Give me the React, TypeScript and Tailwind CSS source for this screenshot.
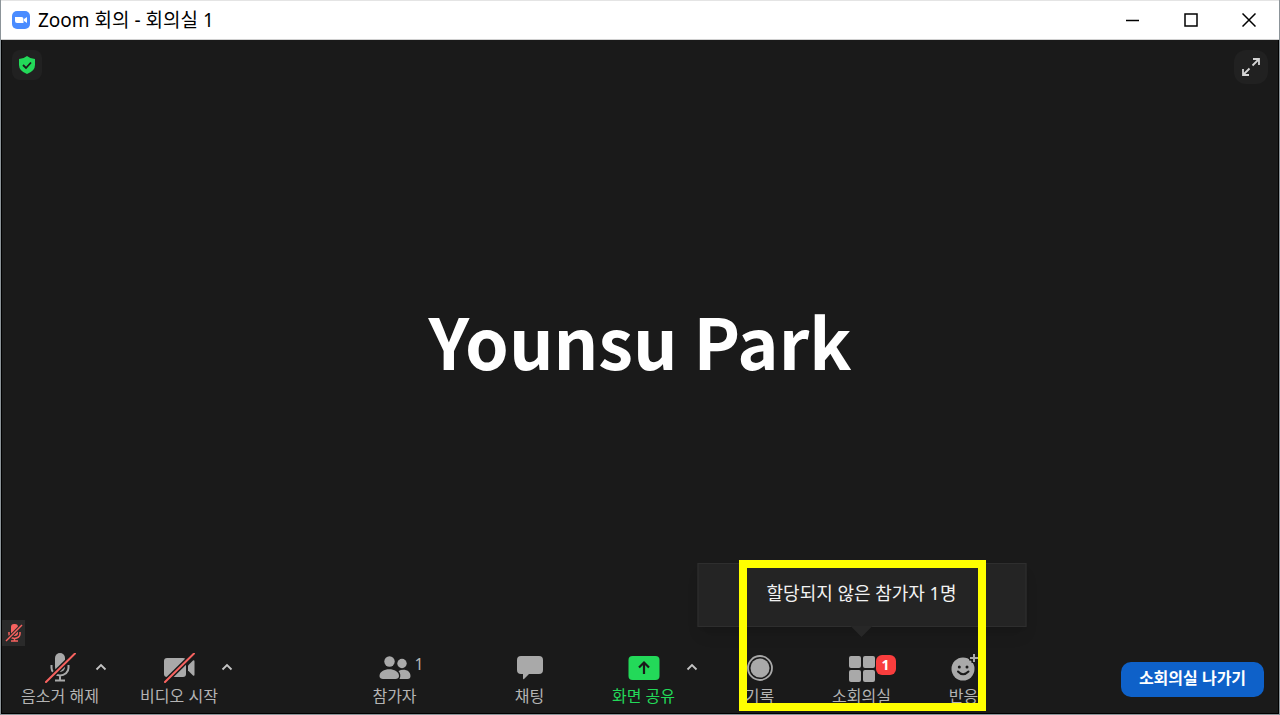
import type { ReactNode } from "react";

const slash = (d: string) => (
  <>
    <path d={d} stroke="#1a1a1a" strokeWidth="5" />
    <path d={d} stroke="#f7625f" strokeWidth="2" strokeLinecap="round" />
  </>
);

function MicOffIcon() {
  return (
    <svg width="32" height="30" viewBox="0 0 32 30" fill="none" aria-hidden="true">
      <rect x="11" y="0" width="10" height="19" rx="5" fill="#a9a9a9" />
      <path d="M7.5 12v3a8.5 7.5 0 0 0 17 0v-3M16 22v5M11 27.5h10" stroke="#a9a9a9" strokeWidth="2" />
      {slash("M2 29 31 0.5")}
    </svg>
  );
}

function VideoOffIcon() {
  return (
    <svg width="34" height="30" viewBox="0 0 34 30" fill="none" aria-hidden="true">
      <rect x="2" y="5" width="22" height="19" rx="3" fill="#a9a9a9" />
      <path d="M26 12.5 31 7.500q1.500-.8 1.500 1v13q0 1.800-1.500 1L26 17.500Z" fill="#a9a9a9" />
      {slash("M3 29 32 0.500")}
    </svg>
  );
}

function ParticipantsIcon() {
  return (
    <svg width="32" height="24" viewBox="0 0 32 24" fill="#a9a9a9" aria-hidden="true">
      <circle cx="23" cy="7.500" r="4.700" />
      <path d="M20.500 23c1.500-3 1-6-1-8 5-2.500 12-1 12 5 0 2-1 3-3 3Z" />
      <circle cx="10.500" cy="5.500" r="5.200" />
      <path d="M4 23c-2 0-3.500-1-3.500-3C.5 11 20 11 20 20c0 2-1.500 3-3.500 3Z" />
    </svg>
  );
}

function ChatIcon() {
  return (
    <svg width="28" height="26" viewBox="0 0 28 26" fill="#a9a9a9" aria-hidden="true">
      <path d="M5 1h18q4 0 4 4v10q0 4-4 4H13l-5 5q-1 1-1-1v-4H5q-4 0-4-4V5q0-4 4-4Z" />
    </svg>
  );
}

function ShareIcon() {
  return (
    <svg width="32" height="24" viewBox="0 0 32 24" fill="none" aria-hidden="true">
      <rect x="0.500" width="31" height="24" rx="4" fill="#23d959" />
      <path d="M16 18V7M11 11.500 16 6.500l5 5" stroke="#1a1a1a" strokeWidth="2.200" />
    </svg>
  );
}

function RecordIcon() {
  return (
    <svg width="26" height="26" viewBox="0 0 26 26" fill="none" aria-hidden="true">
      <circle cx="13" cy="13" r="12" stroke="#a9a9a9" strokeWidth="1.800" />
      <circle cx="13" cy="13" r="9.500" fill="#a9a9a9" />
    </svg>
  );
}

function RoomsIcon() {
  return (
    <svg width="28" height="28" viewBox="0 0 28 28" fill="#a9a9a9" aria-hidden="true">
      <rect x="1" y="2" width="12" height="12" rx="2" />
      <rect x="15" y="2" width="12" height="12" rx="2" />
      <rect x="1" y="16" width="12" height="12" rx="2" />
      <rect x="15" y="16" width="12" height="12" rx="2" />
    </svg>
  );
}

function ReactionIcon() {
  return (
    <svg width="28" height="28" viewBox="0 0 28 28" fill="none" aria-hidden="true">
      <circle cx="13" cy="15" r="11.500" fill="#a9a9a9" />
      <circle cx="9.300" cy="13" r="1.500" fill="#1a1a1a" />
      <circle cx="17" cy="13" r="1.500" fill="#1a1a1a" />
      <path d="M8 17.500q5 5.500 10.500 0" stroke="#1a1a1a" strokeWidth="2" strokeLinecap="round" />
      <path d="M24 -1v10M19 4h10" stroke="#1a1a1a" strokeWidth="5" />
      <path d="M24 0v8M20 4h8" stroke="#a9a9a9" strokeWidth="2" />
    </svg>
  );
}

function Caret({ label, className = "" }: { label: string; className?: string }) {
  return (
    <button type="button" aria-label={label} className={`flex h-[30px] w-4 shrink-0 items-center justify-center ${className}`}>
      <svg width="12" height="8" viewBox="0 0 12 8" fill="none" aria-hidden="true">
        <path d="M1.500 6.500 6 2l4.500 4.500" stroke="#c4c4c4" strokeWidth="1.800" />
      </svg>
    </button>
  );
}

function Tool({ icon, label, className = "", labelClass = "text-[#b4b4b4]", children }: {
  icon: ReactNode;
  label: string;
  className?: string;
  labelClass?: string;
  children?: ReactNode;
}) {
  return (
    <div className={`relative shrink-0 ${className}`}>
      <button type="button" className="flex w-20 flex-col items-center">
        <span className="flex h-8 items-center justify-center">{icon}</span>
        <span className={`whitespace-nowrap text-base leading-6 ${labelClass}`}>{label}</span>
      </button>
      {children}
    </div>
  );
}

function TitleBar() {
  return (
    <header className="flex h-10 shrink-0 items-center justify-between border-t border-b border-t-[#e4e4e4] border-b-[#d0d0d0] bg-white pl-[11px] text-black">
      <div className="flex items-center gap-2">
        <svg width="18" height="18" viewBox="0 0 18 18" aria-hidden="true">
          <rect width="18" height="18" rx="5" fill="#4a8cff" />
          <path d="M3 6h6.500q2 0 2 2v4H5q-2 0-2-2ZM12 8l3-2v6l-3-2Z" fill="#fff" />
        </svg>
        <h1 className="text-[19px] leading-6">Zoom 회의 - 회의실 1</h1>
      </div>
      <div className="flex pr-px">
        <button type="button" aria-label="최소화" className="flex h-9 w-[58px] items-center justify-center">
          <svg width="14" height="14" viewBox="0 0 14 14" aria-hidden="true"><path d="M0 7.500h13" stroke="#000" strokeWidth="1.500" /></svg>
        </button>
        <button type="button" aria-label="최대화" className="flex h-9 w-[58px] items-center justify-center">
          <svg width="14" height="14" viewBox="0 0 14 14" fill="none" aria-hidden="true"><rect x="1" y="1" width="12" height="12" stroke="#000" strokeWidth="1.500" /></svg>
        </button>
        <button type="button" aria-label="닫기" className="flex h-9 w-[58px] items-center justify-center">
          <svg width="14" height="14" viewBox="0 0 14 14" aria-hidden="true"><path d="m.5.5 13 13M13.500.5l-13 13" stroke="#000" strokeWidth="1.500" /></svg>
        </button>
      </div>
    </header>
  );
}

export default function App() {
  return (
    <div className="flex min-h-screen flex-col overflow-hidden border-x border-b border-[#8c9499] bg-[#1a1a1a] font-['Noto_Sans','Noto_Sans_CJK_KR',sans-serif]">
      <TitleBar />
      <main className="relative flex flex-1 flex-col border-x border-b border-black">
        <div className="flex h-14 items-start justify-between px-2.5 pt-2.5">
          <button type="button" aria-label="암호화 정보" className="flex size-[30px] items-center justify-center rounded-lg bg-[#212121]">
            <svg width="18" height="20" viewBox="0 0 18 20" fill="none" aria-hidden="true">
              <path d="M9 1q3.500 3 8 3v6q0 6-8 9-8-3-8-9V4q4.500 0 8-3Z" fill="#23d959" />
              <path d="m5 10 3 3 5-5.500" stroke="#1a1a1a" strokeWidth="1.800" />
            </svg>
          </button>
          <button type="button" aria-label="전체 화면" className="flex size-[34px] items-center justify-center rounded-xl bg-[#212121]">
            <svg width="20" height="20" viewBox="0 0 20 20" fill="none" stroke="#d4d4d4" strokeWidth="1.800" aria-hidden="true">
              <path d="M11.500 8.500 18 2M12 2h6v6M8.500 11.500 2 18M2 12v6h6" />
            </svg>
          </button>
        </div>
        <div className="flex flex-1 items-center justify-center pb-9">
          <h2 className="font-['Noto_Sans_CJK_KR',sans-serif] text-[70px] leading-none font-bold text-white">Younsu Park</h2>
        </div>
        <div className="flex h-[26px] w-[23px] items-center justify-center bg-[#2a2a2a]">
          <svg width="18" height="20" viewBox="0 0 18 20" fill="none" aria-label="음소거됨" role="img">
            <rect x="6" y="1" width="7" height="12" rx="3" fill="#f7625f" />
            <path d="M4 9v2a5.500 4.500 0 0 0 11 0V9M9.500 15v3M6 18h7" stroke="#f7625f" strokeWidth="1.500" />
            <path d="M1 18 17 2" stroke="#2a2a2a" strokeWidth="3.500" />
            <path d="M1 18 17 2" stroke="#f7625f" strokeWidth="1.500" />
          </svg>
        </div>
        <footer className="flex items-start justify-between pt-1.5 pr-3.5 pb-[5px] pl-[18px]">
          <div className="flex">
            <Tool icon={<MicOffIcon />} label="음소거 해제" />
            <Caret label="오디오 옵션" className="-ml-[7px]" />
            <Tool icon={<VideoOffIcon />} label="비디오 시작" className="ml-[30px]" />
            <Caret label="비디오 옵션" />
          </div>
          <div className="flex pl-0.5">
            <Tool icon={<ParticipantsIcon />} label="참가자">
              <span className="absolute top-0 left-[60px] text-base leading-6 text-[#b4b4b4]">1</span>
            </Tool>
            <Tool icon={<ChatIcon />} label="채팅" className="ml-[55px]" />
            <Tool icon={<ShareIcon />} label="화면 공유" labelClass="text-[#23d959]" className="ml-[34px]" />
            <Caret label="공유 옵션" />
            <div className="relative ml-5 flex gap-[22px]">
              <Tool icon={<RecordIcon />} label="기록" />
              <Tool icon={<RoomsIcon />} label="소회의실">
                <span className="absolute top-[3px] left-[54px] flex size-5 items-center justify-center rounded-md bg-[#f93d3d] text-sm font-bold text-white">1</span>
                <div role="tooltip" className="absolute bottom-[81px] left-1/2 flex h-16 w-[329px] -translate-x-1/2 items-center justify-center border border-[#2e2e2e] bg-[#242424] pb-1 text-lg whitespace-nowrap text-[#f2f2f2] shadow-lg">
                  할당되지 않은 참가자 1명
                  <svg className="absolute top-full left-1/2 -translate-x-1/2" width="22" height="11" viewBox="0 0 22 11" aria-hidden="true">
                    <path d="M0 0h22L11 11Z" fill="#272727" />
                  </svg>
                </div>
              </Tool>
              <Tool icon={<ReactionIcon />} label="반응" />
              <div className="pointer-events-none absolute -top-[92px] right-[18px] -bottom-[3px] left-[19px] border-8 border-[#ffff00]" />
            </div>
          </div>
          <button type="button" className="mt-2.5 flex h-[35px] w-[143px] items-center justify-center rounded-[10px] bg-[#0e61c9] pb-1 text-base font-bold whitespace-nowrap text-white">
            소회의실 나가기
          </button>
        </footer>
      </main>
    </div>
  );
}
